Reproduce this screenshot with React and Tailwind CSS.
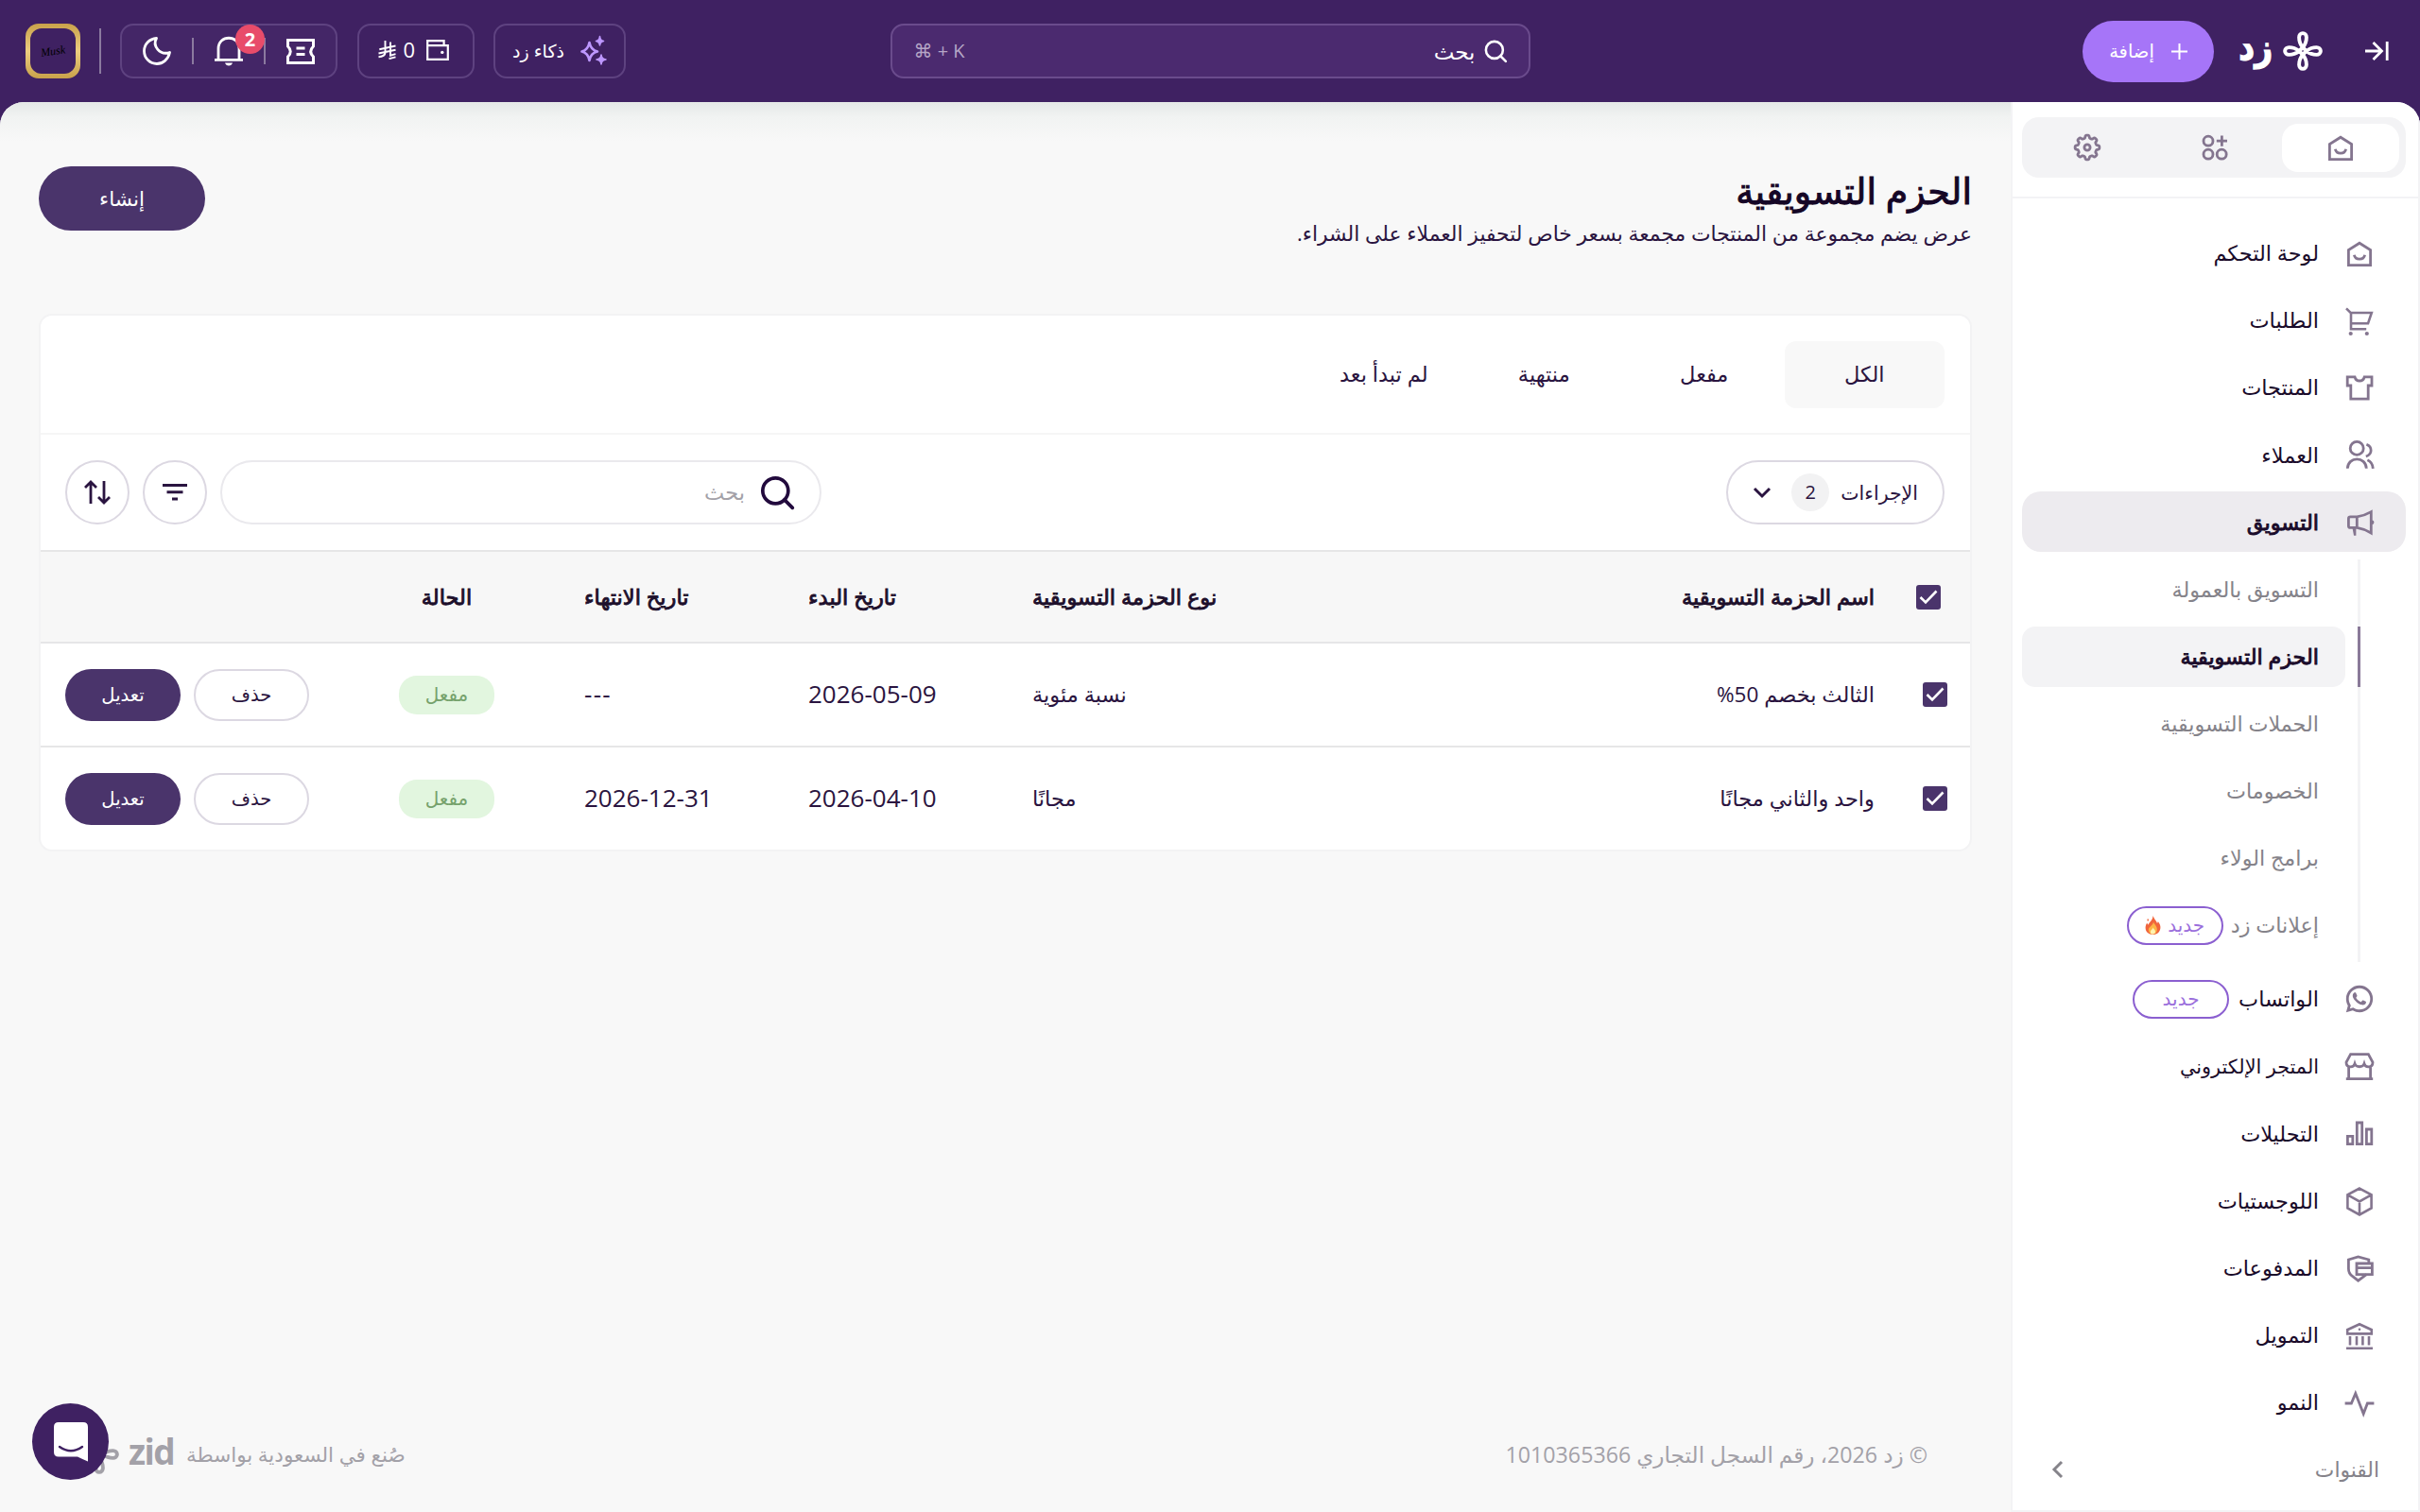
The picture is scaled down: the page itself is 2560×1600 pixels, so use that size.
import React from 'react';
import { RiWhatsappLine } from 'react-icons/ri';

function Icon({ size = 32, className = '', sw = 2.8, children }) {
  return (
    <svg width={size} height={size} viewBox="0 0 32 32" fill="none" stroke="currentColor" strokeWidth={sw} className={`shrink-0 overflow-visible ${className}`}>
      {children}
    </svg>
  );
}

const HomeIcon = () => (
  <Icon>
    <path d="M16 5.2 27.6 12.6V28.7H4.4V12.6Z" />
    <path d="M10.4 17.8c1 5.8 10.2 5.8 11.2 0" />
  </Icon>
);

const CartIcon = () => (
  <Icon sw={2.6}>
    <path d="M2 3.4 7 8.2V25.2H23.2M6 8H28.8L25 19.3H7" />
    <circle cx="6.7" cy="30" r="2.1" fill="currentColor" stroke="none" />
    <circle cx="23.8" cy="30" r="2.1" fill="currentColor" stroke="none" />
  </Icon>
);

const ShirtIcon = () => (
  <Icon>
    <path d="M3.2 4.8H11C12.4 10.4 19.8 10.4 21.2 4.8H29V14H25.2V28.2H6.8V14H3.2Z" />
  </Icon>
);

const UsersIcon = () => (
  <Icon>
    <circle cx="13.2" cy="9.4" r="7" />
    <path d="M3.3 30.8c.4-13.2 19.6-13.2 20 0M23.4 5.2c6.4 2.6 6.4 10.4-.6 12.8M24.4 21.8c3.2 1.4 5.6 4 5.9 9" />
  </Icon>
);

const MegaphoneIcon = () => (
  <Icon>
    <path d="M13.3 10.8H6.4Q4.4 10.8 4.4 12.8V20.4Q4.4 22.4 6.4 22.4H13.3ZM13.3 10.8Q21.5 9.6 28.3 5.6V28Q21.5 23.8 13.3 22.4" />
    <path d="M8.6 23H12.4V30.8H10Z" fill="currentColor" stroke="none" />
    <circle cx="29.2" cy="16.7" r="2.2" fill="currentColor" stroke="none" />
  </Icon>
);

const StoreIcon = () => (
  <Icon>
    <path d="M6.6 3.6H25.4L30 12.2C30 17.8 22.6 18.6 21 13.6C19.6 17.8 12.4 17.8 11 13.6C9.4 18.6 2 17.8 2 12.2ZM4.6 16V29.6M27.6 16V29.6M1.8 29.6H30.2" />
  </Icon>
);

const BarsIcon = () => (
  <Icon>
    <path d="M3.4 19.4H8.8V27.6H3.4ZM13.3 5H18.7V27.6H13.3ZM23.4 12H28.8V27.6H23.4Z" />
  </Icon>
);

const BoxIcon = () => (
  <Icon sw={2.6}>
    <path d="M16 2.6 28.6 9.4V23.4L16 30.4 3.4 23.4V9.4ZM3.4 9.4 16 16.4 28.6 9.4M16 16.4V30.4" />
  </Icon>
);

const ShieldIcon = () => (
  <Icon>
    <path d="M25.8 10V7L14.6 4 4.4 7V16.5Q4.4 21.5 8.4 24.4L14.6 29.2 23.4 22.6" />
    <path d="M13 11H29.4V22.6H13ZM13 15.6H29.4" />
  </Icon>
);

const BankIcon = () => (
  <Icon sw={2.6}>
    <path d="M16 4.2 28.8 10.2V14.4H3.2V10.2ZM6 17V26.6M13 17V26.6M19.4 17V26.6M26 17V26.6M2 29.8H30" />
    <circle cx="16" cy="9.8" r="1.3" fill="currentColor" stroke="none" />
  </Icon>
);

const PulseIcon = () => (
  <Icon>
    <path d="M.6 17H7.4L11.8 6.4 20.2 28 24.4 17H31.4" />
  </Icon>
);

const AppsIcon = () => (
  <Icon>
    <circle cx="9" cy="9.2" r="5" />
    <circle cx="9" cy="23.2" r="5" />
    <circle cx="23.2" cy="23.2" r="5" />
    <path d="M23.4 3.6V14.8M17.8 9.2H29" />
  </Icon>
);

// eight rounded teeth sampled around the circle
const gearPath = Array.from({ length: 144 }, (_, i) => {
  const a = (i / 144) * Math.PI * 2;
  const r = 11.4 + 1.5 * Math.tanh(2.4 * Math.cos(a * 8));
  return `${i ? 'L' : 'M'}${(16 + r * Math.sin(a)).toFixed(2)} ${(16 - r * Math.cos(a)).toFixed(2)}`;
}).join('') + 'Z';

const GearIcon = () => (
  <Icon>
    <path d={gearPath} strokeLinejoin="round" />
    <circle cx="16" cy="16" r="3.1" />
  </Icon>
);

const Flower = ({ size, className = '' }) => (
  <svg width={size} height={size} viewBox="-21 -21 42 42" fill="none" stroke="currentColor" strokeWidth="3.9" className={`shrink-0 ${className}`}>
    {[0, 90, 180, 270].map((r) => (
      <path key={r} transform={`rotate(${r})`} d="M-3.8 0 0 -3.8C3 -7.5 3.9 -10.5 3.9 -14.6A3.9 4.3 0 0 0 -3.9 -14.6C-3.9 -10.5 -3 -7.5 0 -3.8" />
    ))}
  </svg>
);

const SearchIcon = ({ size, sw }) => (
  <Icon size={size} sw={sw}>
    <circle cx="14.5" cy="14.5" r="12" />
    <path d="m23 23 7.5 7.5" strokeLinecap="round" />
  </Icon>
);

const menu = [
  { label: 'لوحة التحكم', icon: HomeIcon },
  { label: 'الطلبات', icon: CartIcon },
  { label: 'المنتجات', icon: ShirtIcon },
  { label: 'العملاء', icon: UsersIcon },
  { label: 'التسويق', icon: MegaphoneIcon, active: true },
];

const marketing = [
  { label: 'التسويق بالعمولة' },
  { label: 'الحزم التسويقية', active: true },
  { label: 'الحملات التسويقية' },
  { label: 'الخصومات' },
  { label: 'برامج الولاء' },
  { label: 'إعلانات زد', hot: true },
];

const menuBottom = [
  { label: 'الواتساب', icon: () => <RiWhatsappLine size={34} className="-mx-px shrink-0" />, isNew: true },
  { label: 'المتجر الإلكتروني', icon: StoreIcon, tight: true },
  { label: 'التحليلات', icon: BarsIcon },
  { label: 'اللوجستيات', icon: BoxIcon },
  { label: 'المدفوعات', icon: ShieldIcon },
  { label: 'التمويل', icon: BankIcon },
  { label: 'النمو', icon: PulseIcon },
];

const rows = [
  { name: 'الثالث بخصم 50%', type: 'نسبة مئوية', start: '2026-05-09', end: '---' },
  { name: 'واحد والثاني مجانًا', type: 'مجانًا', start: '2026-04-10', end: '2026-12-31' },
];

function Flame() {
  return (
    <svg width="17" height="20" viewBox="0 0 17 20" className="shrink-0">
      <path d="M8.5 0C10 4 12 5 13 8C13.6 7.4 13.8 6.6 13.8 6C16 8.6 16.6 11 16.4 13C16 17.4 12.6 20 8.6 20C4 20 .6 17 .6 12.8C.6 10.4 1.4 8.6 2.4 7.4C2.6 8.6 3 9.2 3.6 9.6C4.6 6.6 8.6 4.6 8.5 0Z" fill="#f0653c" />
      <path d="M9 6.4C9.6 9 12.8 10.4 12.8 14.4C12.8 17.6 11 19.6 8.4 19.6C5.8 19.6 3.8 17.6 3.8 15C3.8 11.4 8.6 10.6 9 6.4Z" fill="#fdb446" />
      <path d="M8.6 12.4C9 14 11 14.8 11 16.8C11 18.6 10 19.6 8.4 19.6C6.8 19.6 5.8 18.6 5.8 17C5.8 15 8.4 14.4 8.6 12.4Z" fill="#fff3b0" />
      <path d="M3.2 3.4v2" stroke="#f0653c" strokeWidth="1.4" />
    </svg>
  );
}

function Badge({ hot }) {
  return (
    <span className="flex h-[41px] w-[102px] items-center justify-center gap-[7px] rounded-full border-2 border-[#8b5fd0] text-[20px] leading-none text-[#9b6fdc]">
      جديد
      {hot && <Flame />}
    </span>
  );
}

function MenuItem({ item }) {
  const ItemIcon = item.icon;
  return (
    <div className={`flex h-16 items-center rounded-[20px] pr-[33px] ${item.active ? 'bg-[#edebef]' : ''}`}>
      <span className="flex w-8 justify-center text-[#84758f]"><ItemIcon /></span>
      <span className={`mr-[27px] ml-2.5 text-[#1a0b2a] ${item.tight ? 'text-[20.8px]' : 'text-[22.4px]'} ${item.active ? '[-webkit-text-stroke:0.9px]' : ''}`}>{item.label}</span>
      {item.isNew && <Badge />}
    </div>
  );
}

function Sidebar() {
  return (
    <aside className="flex w-[433px] shrink-0 flex-col border-x-2 border-b-2 border-[#f3f3f5] bg-white">
      <div className="border-b-2 border-[#f3f3f5] pt-4 pr-[13px] pb-5 pl-[10px]">
        <div className="flex h-16 items-center rounded-[18px] bg-[#f3f3f5] px-[7px] text-[#84758f]">
          <div className="flex h-[51px] w-[125px] items-center justify-center rounded-[17px] bg-white"><HomeIcon /></div>
          <div className="mr-[9px] ml-[10px] flex h-[51px] w-[125px] items-center justify-center"><AppsIcon /></div>
          <div className="flex h-[51px] w-[125px] items-center justify-center"><GearIcon /></div>
        </div>
      </div>
      <nav className="flex flex-col gap-[7.11px] pt-[26px] pr-[13px] pl-[10px]">
        {menu.map((item) => <MenuItem key={item.label} item={item} />)}
        <div className="mr-[48px] flex flex-col gap-[7.11px] border-r-[3px] border-[#f3f3f5] pb-[7px]">
          {marketing.map((item) => (
            <div
              key={item.label}
              className={`relative mr-[13px] flex h-16 items-center gap-2 rounded-[14px] pr-7 text-[22.3px] ${item.active ? 'bg-[#f3f3f5] text-[#1a0b2a] [-webkit-text-stroke:0.9px]' : 'text-[#85838a]'}`}
            >
              {item.active && <span className="absolute inset-y-0 -right-4 w-[3px] bg-[#8a7a99]" />}
              {item.label}
              {item.hot && <Badge hot />}
            </div>
          ))}
        </div>
        {menuBottom.map((item) => <MenuItem key={item.label} item={item} />)}
        <div className="flex h-16 items-center justify-between pr-7 pl-[30px] text-[21.8px] text-[#85838a]">
          القنوات
          <svg width="14" height="20" viewBox="0 0 14 20" fill="none" stroke="currentColor" strokeWidth="3"><path d="M12 2 4 10l8 8" /></svg>
        </div>
      </nav>
    </aside>
  );
}

function Header() {
  return (
    <header className="grid h-[108px] grid-cols-[1fr_677px_1fr] items-center bg-[#3f2162] text-white">
      <div className="flex items-center pr-[33px]">
        <svg width="25" height="22" viewBox="0 0 25 22" fill="none" stroke="currentColor" strokeWidth="2.8"><path d="M0 11H17M8.5 2l9 9-9 9M23.2 1V21" /></svg>
        <Flower size={42} className="mr-[45px] -mt-px" />
        <span className="-mt-3.5 mr-[11px] w-[34px] origin-right scale-x-[.84] text-[39px] leading-none font-bold [-webkit-text-stroke:1.4px]">زد</span>
        <button className="mr-7 flex h-[65px] w-[139px] items-center justify-center gap-[18px] rounded-full bg-[#a675f8] text-[19.5px]">
          <svg width="17" height="17" viewBox="0 0 17 17" stroke="currentColor" strokeWidth="2"><path d="M8.5 0V17M0 8.5H17" /></svg>
          إضافة
        </button>
      </div>
      <div className="flex h-[58px] items-center rounded-[14px] border-2 border-[#6a4b8c] bg-[#4b2a6f] px-[23px] text-[23px]">
        <SearchIcon size={24} sw={3.4} />
        <span className="mr-[9px]">بحث</span>
        <span dir="ltr" className="mr-auto text-[20px] text-[#b5a6c6]">⌘ + K</span>
      </div>
      <div className="flex items-center justify-end pl-[27px]">
        <div className="flex h-[58px] w-[140px] items-center justify-center gap-[17px] rounded-[14px] border-2 border-[#5e4280] text-[19px]">
          <svg width="28" height="34" viewBox="0 0 28 34" fill="none" stroke="#bd97ff" strokeWidth="2.6" strokeLinejoin="round">
            <path d="M9.5 8Q11 16 18 17.5Q11 19 9.5 27Q8 19 1.5 17.5Q8 16 9.5 8Z" />
            <path d="M20.5 1.5Q21 6 24.5 6.5Q21 7 20.5 11Q20 7 16.5 6.5Q20 6 20.5 1.5ZM22 21Q22.5 25.5 27 26Q22.5 26.5 22 31Q21.5 26.5 17 26Q21.5 25.5 22 21Z" fill="#bd97ff" strokeWidth="1.6" />
          </svg>
          ذكاء زد
        </div>
        <div className="mr-5 flex h-[58px] w-[124px] items-center rounded-[14px] border-2 border-[#5e4280] pr-[25px] pb-[3px] text-[22px]">
          <svg width="24" height="22" viewBox="0 0 24 22" fill="none" stroke="currentColor" strokeWidth="2.2"><path d="M1.2 6.2H22.8V20.8H1.2ZM1.2 6.2V1.2H18.6V6.2" /><circle cx="16.8" cy="13.4" r="1.7" fill="currentColor" stroke="none" /></svg>
          <span className="mr-[12px]">0</span>
          <svg width="19" height="20" viewBox="0 0 19 20" fill="none" stroke="currentColor" strokeWidth="1.9" className="mr-[7px]"><path d="M7.5 0V13Q7 16.5 .5 17.3M13 1.6V15.7L18.5 14.2M1.3 9.2 18.5 5.5M.5 13.5 18.5 9.7M11.5 19.2 18.5 17.4" /></svg>
        </div>
        <div className="mr-[21px] flex h-[58px] w-[230px] items-center justify-between rounded-[14px] border-2 border-[#5e4280] bg-[#442667] px-[22px]">
          <svg width="30" height="27" viewBox="0 0 30 27" fill="none" stroke="currentColor" strokeWidth="3"><path d="M1.5 1.5H28.5V8Q23 13.5 28.5 19V25.5H1.5V19Q7 13.5 1.5 8V1.500ZM10.5 10H19.5M10.5 16.5H19.5" /></svg>
          <span className="h-7 w-0.5 bg-[#8b7a9f]" />
          <span className="relative">
            <svg width="30" height="32" viewBox="0 0 30 32" fill="none" stroke="currentColor" strokeWidth="2.8"><path d="M4 25V13.5C4 -1.5 26 -1.5 26 13.5V25M0 25.3H30" /><path d="M11 28.5H19Q18 31.5 15 31.5Q12 31.5 11 28.5Z" fill="currentColor" stroke="none" /></svg>
            <span className="absolute -top-3 left-[22px] flex h-[31px] w-[31px] items-center justify-center rounded-full bg-[#e84c6a] text-[20px] leading-none font-bold">2</span>
          </span>
          <span className="h-7 w-0.5 bg-[#8b7a9f]" />
          <svg width="30" height="30" viewBox="0 0 30 30" fill="none" stroke="currentColor" strokeWidth="2.8" strokeLinejoin="round"><path d="M14.5 1.5C10 9.5 18 20 28.5 16.5C27 24 21 28.5 15 28.5C7.5 28.5 1.5 22.5 1.5 15C1.5 8 7 2 14.5 1.5Z" /></svg>
        </div>
        <span className="mr-5 h-12 w-0.5 bg-[#8b7a9f]" />
        <div className="mr-5 flex h-[58px] w-[58px] items-center justify-center rounded-[14px] bg-linear-to-b from-[#c9a24a] via-[#eccd80] to-[#c9a24a]">
          <div className="flex h-12 w-12 items-center justify-center rounded-[12px] bg-[#3f2162]">
            <span className="-rotate-8 font-['Liberation_Serif',serif] text-[12px] text-black italic">Musk</span>
          </div>
        </div>
      </div>
    </header>
  );
}

function Checkbox({ className = '' }) {
  return (
    <span className={`flex h-[26px] w-[26px] items-center justify-center rounded-[3px] bg-[#4a346b] ${className}`}>
      <svg width="20" height="16" viewBox="0 0 20 16" fill="none" stroke="#fff" strokeWidth="2.6"><path d="m1.5 8 5.5 5.5L18.5 1.5" /></svg>
    </span>
  );
}

const cols = 'grid grid-cols-[101px_654px_237px_237px_237px_196px_1fr] items-center';

function Toolbar() {
  return (
    <div className="flex h-[122px] items-center pr-[27px] pl-[26px]">
      <div className="flex h-[68px] w-[231px] items-center rounded-full border-2 border-[#dcd8e2] pr-[26px] text-[20.5px]">
        الإجراءات
        <span className="mr-3 flex h-10 w-10 items-center justify-center rounded-full bg-[#f2f2f3] text-[20px]">2</span>
        <svg width="20" height="13" viewBox="0 0 20 13" fill="none" stroke="currentColor" strokeWidth="3" className="mr-[21px]"><path d="m2 2 8 8 8-8" /></svg>
      </div>
      <div className="mr-auto flex h-[68px] w-[636px] items-center rounded-full border-2 border-[#eae9ed] pr-[27px] text-[22.5px] text-[#a3a1a8]">
        <span className="text-[#220a3d]"><SearchIcon size={36} sw={3.3} /></span>
        <span className="mr-4">بحث</span>
      </div>
      <span className="mr-3.5 flex h-[68px] w-[68px] items-center justify-center rounded-full border-2 border-[#dcd8e2]">
        <svg width="26" height="18" viewBox="0 0 26 18" stroke="currentColor" strokeWidth="3"><path d="M0 1.5H26M4.5 8.8H21.5M10 16H16" /></svg>
      </span>
      <span className="mr-3.5 flex h-[68px] w-[68px] items-center justify-center rounded-full border-2 border-[#dcd8e2]">
        <svg width="28" height="26" viewBox="0 0 28 26" fill="none" stroke="currentColor" strokeWidth="2.8"><path d="M7 25V2M1 8 7 2 13 8M21 1V24M15 18 21 24 27 18" /></svg>
      </span>
    </div>
  );
}

function ChatButton() {
  return (
    <div className="absolute top-[1485px] left-[34px] flex h-[81px] w-[81px] items-center justify-center rounded-full bg-[#3f2162]">
      <svg width="36" height="42" viewBox="0 0 36 42">
        <path d="M5 0H31Q36 0 36 5V41.5Q30 39 25 36.5H5Q0 36.5 0 31.5V5Q0 0 5 0Z" fill="#fff" />
        <path d="M6 26Q18 34.5 30 26" fill="none" stroke="#3f2162" strokeWidth="2.4" strokeLinecap="round" />
      </svg>
    </div>
  );
}

export default function App() {
  return (
    <div dir="rtl" className="relative flex h-[1600px] w-[2560px] flex-col overflow-hidden bg-[#3f2162] font-['Open_Sans','DejaVu_Sans',sans-serif] text-[#2a1440]">
      <Header />
      <div className="flex min-h-0 flex-1 overflow-hidden rounded-t-[25px] bg-[#f8f8f8]">
        <Sidebar />
        <main className="flex flex-1 flex-col bg-[linear-gradient(to_bottom,#e5e8e7,#f1f3f2_16px,#f8f8f8_42px)] pr-[41px] pl-[41px]">
          <div className="flex h-[224px] items-start justify-between pt-[68px]">
            <div>
              <h1 className="text-[38px] leading-[50px] text-[#150626] [-webkit-text-stroke:1px]">الحزم التسويقية</h1>
              <p className="mt-1 text-[21.9px] leading-[34px]">عرض يضم مجموعة من المنتجات مجمعة بسعر خاص لتحفيز العملاء على الشراء.</p>
            </div>
            <button className="h-[68px] w-[176px] rounded-full bg-[#4a346b] text-[21.5px] text-white">إنشاء</button>
          </div>
          <section className="h-[569px] shrink-0 overflow-hidden rounded-[14px] border-2 border-[#f3f3f4] bg-white">
            <div className="flex h-[126px] items-center border-b-2 border-[#f6f6f6] px-[27px] text-[22.5px]">
              {['الكل', 'مفعل', 'منتهية', 'لم تبدأ بعد'].map((tab, i) => (
                <div key={tab} className={`flex h-[71px] w-[169.5px] items-center justify-center rounded-[12px] ${i === 0 ? 'bg-[#f8f8f8]' : ''}`}>{tab}</div>
              ))}
            </div>
            <Toolbar />
            <div className={`${cols} h-[99px] border-y-2 border-[#e6e6e7] bg-[#f7f7f7] text-[22.5px] text-[#1d0f2b] [-webkit-text-stroke:0.9px]`}>
              <Checkbox className="mr-[31px]" />
              <span>اسم الحزمة التسويقية</span>
              <span dir="ltr">نوع الحزمة التسويقية</span>
              <span dir="ltr">تاريخ البدء</span>
              <span dir="ltr">تاريخ الانتهاء</span>
              <span className="mr-auto w-[101px] text-center">الحالة</span>
            </div>
            {rows.map((row) => (
              <div key={row.name} className={`${cols} h-[110px] border-b-2 border-[#e6e6e7] text-[22.5px] last:h-[108px] last:border-0`}>
                <Checkbox className="mr-6" />
                <span>{row.name}</span>
                <span dir="ltr">{row.type}</span>
                <span dir="ltr" className="-mt-0.5 text-[26px]">{row.start}</span>
                <span dir="ltr" className={`-mt-0.5 text-[26px] ${row.end === '---' ? 'tracking-[1.3px]' : ''}`}>{row.end}</span>
                <span className="mr-auto flex h-[41px] w-[101px] items-center justify-center rounded-[19px] bg-[#e2f6df] text-[20px] text-[#76a26c]">مفعل</span>
                <div className="flex justify-end gap-3.5 pl-[26px] text-[19.5px]">
                  <button className="h-[55px] w-[122px] rounded-full border-2 border-[#dcd8e2]">حذف</button>
                  <button className="h-[55px] w-[122px] rounded-full bg-[#4a346b] text-white">تعديل</button>
                </div>
              </div>
            ))}
          </section>
          <footer className="mt-auto flex h-[122px] items-center justify-between pr-[47px] pl-[43px] text-[23.2px] text-[#a3a1a8]">
            <span>© زد 2026، رقم السجل التجاري 1010365366</span>
            <div className="flex items-center">
              <span className="text-[21.5px]">صُنع في السعودية بواسطة</span>
              <span dir="ltr" className="-mt-1.5 mr-[13px] w-12 text-[37px] font-bold tracking-[-1.5px]">zid</span>
              <Flower size={42} className="mr-[10px]" />
            </div>
          </footer>
        </main>
      </div>
      <ChatButton />
    </div>
  );
}
